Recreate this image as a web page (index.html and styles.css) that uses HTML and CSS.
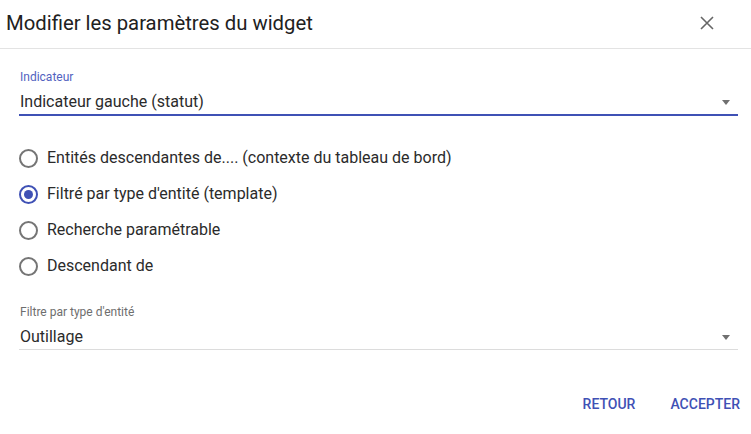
FILE: index.html
```html
<!DOCTYPE html>
<html lang="fr">
<head>
<meta charset="utf-8">
<title>Modifier les paramètres du widget</title>
<link rel="stylesheet" href="styles.css">
</head>
<body>
<div class="dialog">
  <header class="dialog-header">
    <h1 class="dialog-title">Modifier les paramètres du widget</h1>
    <button class="close-btn" aria-label="Fermer">
      <svg width="14" height="14" viewBox="0 0 14 14"><path d="M1 1 L13 13 M13 1 L1 13" stroke="#666" stroke-width="1.6" fill="none"/></svg>
    </button>
  </header>
  <div class="dialog-content">
    <div class="field field-focused">
      <div class="field-label">Indicateur</div>
      <div class="field-row">
        <span class="field-value">Indicateur gauche (statut)</span>
        <span class="arrow"></span>
      </div>
    </div>

    <div class="radio-group">
      <label class="radio"><span class="radio-circle"></span><span class="radio-text">Entités descendantes de.... (contexte du tableau de bord)</span></label>
      <label class="radio checked"><span class="radio-circle"><span class="radio-dot"></span></span><span class="radio-text">Filtré par type d'entité (template)</span></label>
      <label class="radio"><span class="radio-circle"></span><span class="radio-text">Recherche paramétrable</span></label>
      <label class="radio"><span class="radio-circle"></span><span class="radio-text">Descendant de</span></label>
    </div>

    <div class="field field-second">
      <div class="field-label">Filtre par type d'entité</div>
      <div class="field-row">
        <span class="field-value">Outillage</span>
        <span class="arrow"></span>
      </div>
    </div>
  </div>
  <footer class="dialog-actions">
    <button class="action-btn">RETOUR</button>
    <button class="action-btn">ACCEPTER</button>
  </footer>
</div>
</body>
</html>
```

FILE: styles.css
```css
html, body {
  margin: 0;
  padding: 0;
  background: #ffffff;
}
body {
  font-family: Roboto, "Liberation Sans", sans-serif;
  color: rgba(0, 0, 0, 0.87);
  width: 751px;
  height: 434px;
  overflow: hidden;
}
.dialog {
  width: 751px;
}
.dialog-header {
  height: 48px;
  display: flex;
  align-items: center;
  justify-content: space-between;
  padding: 0 0 0 6px;
  border-bottom: 1px solid #e3e3e3;
}
.dialog-title {
  margin: 0;
  font-size: 20.3px;
  font-weight: 400;
  color: #212121;
  line-height: 24px;
  padding-bottom: 2px;
}
.close-btn {
  border: 0;
  background: none;
  padding: 0;
  width: 14px;
  height: 14px;
  margin-right: 37px;
  margin-bottom: 2px;
  display: flex;
}
.dialog-content {
  padding: 21px 13px 0 19px;
}
.field-label {
  font-size: 12px;
  line-height: 14px;
  color: #6e6e6e;
  padding-left: 1px;
}
.field-focused .field-label {
  color: #5262c0;
}
.field-row {
  margin-top: 8px;
  display: flex;
  align-items: center;
  justify-content: space-between;
  padding: 0 8px 2px 1px;
  border-bottom: 1px solid #dcdcdc;
}
.field-focused .field-row {
  border-bottom: 2px solid #3f51b5;
}
.field-second .field-row {
  padding-bottom: 2px;
}
.field-value {
  font-size: 16px;
  line-height: 20px;
  color: #2b2b2b;
}
.arrow {
  width: 0;
  height: 0;
  border-left: 4.5px solid transparent;
  border-right: 4.5px solid transparent;
  border-top: 5px solid #707070;
  margin-top: 1px;
}
.radio-group {
  margin-top: 24px;
  display: flex;
  flex-direction: column;
}
.radio {
  height: 36px;
  display: flex;
  align-items: center;
}
.radio-circle {
  box-sizing: border-box;
  width: 19px;
  height: 19px;
  border: 2px solid #757575;
  border-radius: 50%;
  display: flex;
  align-items: center;
  justify-content: center;
}
.radio.checked .radio-circle {
  border-color: #3f51b5;
}
.radio-dot {
  width: 9px;
  height: 9px;
  border-radius: 50%;
  background: #3f51b5;
}
.radio-text {
  margin-left: 9px;
  font-size: 16px;
  line-height: 20px;
  color: #2b2b2b;
}
.field-second {
  margin-top: 21px;
}
.dialog-actions {
  display: flex;
  justify-content: flex-end;
  gap: 19px;
  padding: 36px 3px 0 0;
}
.action-btn {
  border: 0;
  background: none;
  font-family: Roboto, "Liberation Sans", sans-serif;
  font-size: 14px;
  font-weight: 500;
  color: #3f51b5;
  line-height: 36px;
  height: 36px;
  padding: 0 8px;
}
```
